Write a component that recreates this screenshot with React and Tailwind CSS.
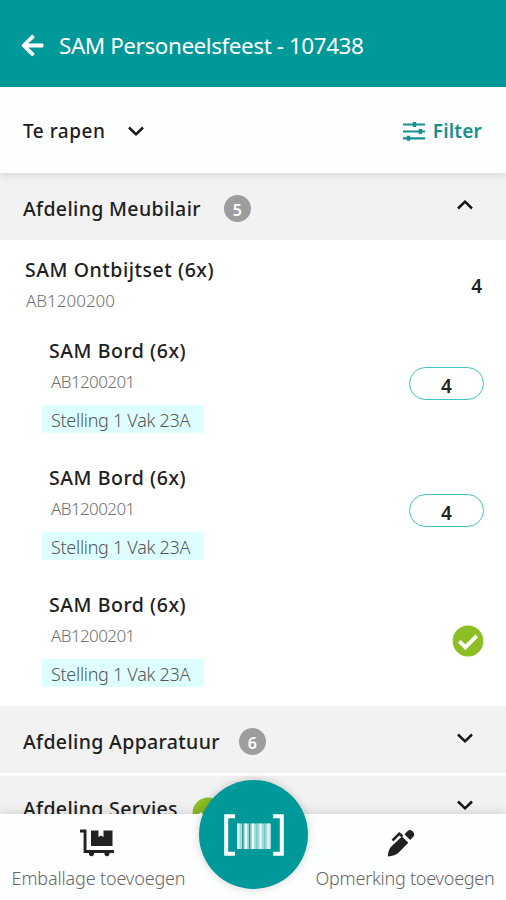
import { FaArrowLeft } from 'react-icons/fa'
import clsx from 'clsx'

const items = [
  { name: 'SAM Bord (6x)', code: 'AB1200201', location: 'Stelling 1 Vak 23A', amount: 4 },
  { name: 'SAM Bord (6x)', code: 'AB1200201', location: 'Stelling 1 Vak 23A', amount: 4 },
  { name: 'SAM Bord (6x)', code: 'AB1200201', location: 'Stelling 1 Vak 23A', done: true },
]

function Chevron({ up }) {
  return (
    <svg viewBox="0 0 18 12" className={clsx('h-3 w-[18px] shrink-0', up && 'rotate-180')}>
      <path d="M2 2.5 9 9.3 16 2.5" fill="none" stroke="#151515" strokeWidth="2.5" />
    </svg>
  )
}

function FilterIcon() {
  return (
    <svg viewBox="0 0 22 20" className="h-5 w-[22px]" stroke="#16908f" strokeWidth="2.2">
      <path d="M0 3.5H22M0 10.5H22M0 17.3H22" />
      <path d="M11.5 1v5M17.3 8v5M5.5 14.8v5" strokeWidth="3.4" />
    </svg>
  )
}

function CheckIcon() {
  return (
    <svg viewBox="0 0 32 32" className="h-8 w-8">
      <circle cx="16" cy="16" r="15.4" fill="#8dbf24" />
      <path d="M7.3 16.4 13.4 22.3 24.8 10.8" fill="none" stroke="#fff" strokeWidth="4" />
    </svg>
  )
}

function DollyIcon() {
  return (
    <svg viewBox="0 0 34 28" className="h-7 w-[34px]" fill="#222">
      <path d="M0 0.5h6.5v20.5H34v3H29.5a2.6 2.6 0 1 1-5 0H14a2.6 2.6 0 1 1-5 0H3.6V3.5H0z" />
      <path d="M11 1.5h7.5v6.5l2.5-1.5 2.5 1.5v-6.5h9v15.5H11z" />
    </svg>
  )
}

function PenIcon() {
  return (
    <svg viewBox="0 0 28 28" className="h-7 w-7" fill="#222">
      <path d="M15 7.5 21.3 13.8 12 23.3Q8 27 .8 27.5 1 20.5 5 16.8z" />
      <path d="M17.4 5.2 20.6 2Q23-.2 25.5 2.3L26.3 3.2Q28.3 5.5 26 8L23.2 11z" />
      <path d="M5.5 11.5 12.3 4.7 15.5 7.5" fill="none" stroke="#222" strokeWidth="2.5" />
    </svg>
  )
}

function BarcodeIcon() {
  return (
    <svg viewBox="0 0 60 42" className="h-[42px] w-[60px]">
      <path d="M11 2.2H2.2V39.8H11M49 2.2H57.8V39.8H49" fill="none" stroke="#fff" strokeWidth="4" />
      <path fill="#a5dada" d="M13 9.5h34V35H13z" />
      <path d="M14.5 9.5V35M22 9.5V35M29 9.5V35M36.5 9.5V35M44.5 9.5V35" stroke="#e9fafa" strokeWidth="2" />
      <path d="M18.8 9.5V35M25.6 9.5V35" stroke="#149c9b" strokeWidth="1.3" />
      <path d="M32.8 9.5V35M40.5 9.5V35" stroke="#6fc3c3" strokeWidth="1" />
    </svg>
  )
}

function Section({ title, count, open, done, className }) {
  return (
    <div className={clsx('flex h-[67px] items-center bg-[#f2f2f2] pr-8 pl-[23px]', className)}>
      <h2 className="pt-1 text-[19.5px] leading-[30px] font-medium tracking-[0.35px] whitespace-nowrap text-[#202020]">{title}</h2>
      {done ? (
        <div className="mt-[11px] ml-3.5">
          <CheckIcon />
        </div>
      ) : (
        <span
          className={clsx(
            'mt-1 flex h-[27px] w-[27px] items-center justify-center rounded-full bg-[#9d9d9d] pt-0.5 text-[16px] font-semibold text-white',
            open ? 'ml-[23px]' : 'ml-[19px]'
          )}
        >
          {count}
        </span>
      )}
      <div className="ml-auto -mt-1">
        <Chevron up={open} />
      </div>
    </div>
  )
}

function Item({ item }) {
  return (
    <div className="flex h-[127px] justify-between pt-2.5 pr-[22px] pl-[42px]">
      <div>
        <h3 className="pt-px pl-[7px] text-[19.5px] leading-[30px] font-medium tracking-[0.55px] text-[#202020]">{item.name}</h3>
        <p className="pl-[9px] text-[17px] leading-[31px] font-light tracking-[-0.6px] text-[#6f6f6f]">{item.code}</p>
        <p className="mt-2 h-7 w-[162px] bg-[#deffff] pl-[9px] text-[18px] leading-[30px] font-light tracking-[-0.3px] whitespace-nowrap text-[#555]">
          {item.location}
        </p>
      </div>
      {item.done ? (
        <div className="pt-9">
          <CheckIcon />
        </div>
      ) : (
        <div className="mt-8 flex h-[33px] w-[75px] items-center justify-center rounded-full border-[1.5px] border-[#45bfc1] pt-1.5 text-[19px] font-semibold text-[#222]">
          {item.amount}
        </div>
      )}
    </div>
  )
}

export default function App() {
  return (
    <div className="relative flex h-[900px] w-[506px] flex-col overflow-hidden bg-white font-['Noto_Sans','Open_Sans',sans-serif]">
      <header className="flex h-[87px] shrink-0 items-center bg-[#009999] pt-1 pl-[21px] text-white">
        <FaArrowLeft className="h-[25px] w-[23px]" />
        <h1 className="ml-[15px] text-[22.5px] leading-[30px] font-normal tracking-[-0.45px] whitespace-nowrap">SAM Personeelsfeest - 107438</h1>
      </header>

      <div className="relative z-10 flex h-[86px] shrink-0 items-center bg-[#fdfefe] pr-6 pl-[23px] shadow-[0_2px_8px_rgba(0,0,0,0.12)]">
        <span className="w-[82px] pt-0.5 text-[19px] leading-[30px] font-medium tracking-[0.5px] whitespace-nowrap text-[#202020]">Te rapen</span>
        <span className="ml-[22px] pt-0.5">
          <Chevron />
        </span>
        <button className="ml-auto flex items-center gap-2 pt-0.5 text-[19px] leading-[30px] font-semibold tracking-[0.2px] text-[#16908f]">
          <FilterIcon />
          Filter
        </button>
      </div>

      <main className="flex-1 overflow-hidden">
        <Section title="Afdeling Meubilair" count={5} open />
        <div className="flex h-[85px] justify-between pt-[15px] pr-6 pl-[25px]">
          <div>
            <h3 className="text-[19.5px] leading-[30px] font-medium tracking-[0.55px] text-[#202020]">SAM Ontbijtset (6x)</h3>
            <p className="mt-px pl-px text-[17px] leading-[30px] font-light text-[#6f6f6f]">AB1200200</p>
          </div>
          <span className="pt-4 text-[19px] leading-[30px] font-semibold text-[#222]">4</span>
        </div>
        {items.map((item, i) => (
          <Item key={i} item={item} />
        ))}
        <Section title="Afdeling Apparatuur" count={6} />
        <Section title="Afdeling Servies" done className="mt-[3px] pb-[5px]" />
      </main>

      <footer className="relative flex h-[86px] shrink-0 justify-between bg-[#fdfefe] px-3 pt-[15px] shadow-[0_-2px_10px_rgba(0,0,0,0.12)]">
        <div className="flex w-[173px] flex-col items-center">
          <div className="mr-[3px]">
            <DollyIcon />
          </div>
          <span className="mt-1.5 text-[18px] leading-[30px] font-light tracking-[-0.15px] whitespace-nowrap text-[#666]">Emballage toevoegen</span>
        </div>
        <div className="flex w-[178px] flex-col items-center">
          <div className="mr-2">
            <PenIcon />
          </div>
          <span className="mt-1.5 text-[18px] leading-[30px] font-light tracking-[-0.25px] whitespace-nowrap text-[#666]">Opmerking toevoegen</span>
        </div>
      </footer>

      <button className="absolute bottom-[11px] left-[199px] flex h-[109px] w-[109px] items-center justify-center rounded-full bg-[#009999] shadow-[0_0_10px_rgba(0,0,0,0.18)]">
        <BarcodeIcon />
      </button>
    </div>
  )
}
